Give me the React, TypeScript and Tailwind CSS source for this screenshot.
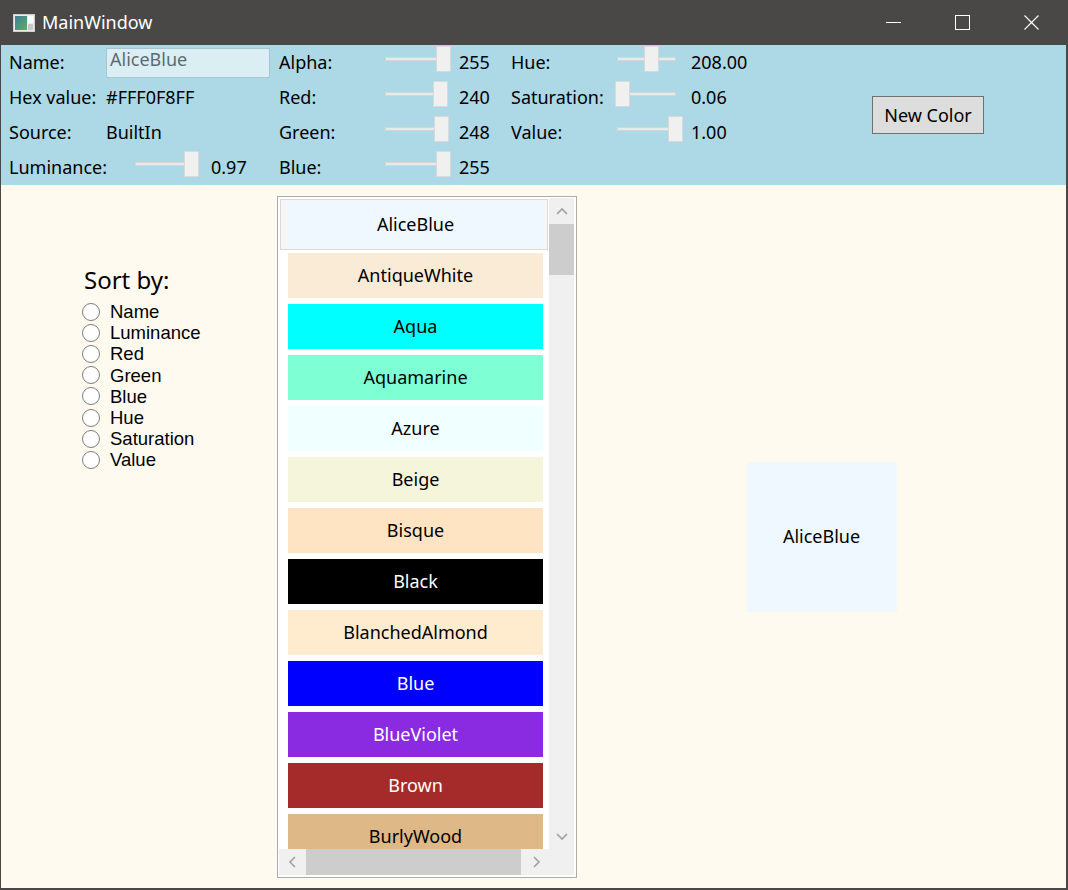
import React from 'react';

type Swatch = { name: string; hex: string; dark?: boolean };

const swatches: Swatch[] = [
  { name: 'AliceBlue', hex: '#F0F8FF' },
  { name: 'AntiqueWhite', hex: '#FAEBD7' },
  { name: 'Aqua', hex: '#00FFFF' },
  { name: 'Aquamarine', hex: '#7FFFD4' },
  { name: 'Azure', hex: '#F0FFFF' },
  { name: 'Beige', hex: '#F5F5DC' },
  { name: 'Bisque', hex: '#FFE4C4' },
  { name: 'Black', hex: '#000000', dark: true },
  { name: 'BlanchedAlmond', hex: '#FFEBCD' },
  { name: 'Blue', hex: '#0000FF', dark: true },
  { name: 'BlueViolet', hex: '#8A2BE2', dark: true },
  { name: 'Brown', hex: '#A52A2A', dark: true },
  { name: 'BurlyWood', hex: '#DEB887' },
];

const sortOptions = ['Name', 'Luminance', 'Red', 'Green', 'Blue', 'Hue', 'Saturation', 'Value'];

function Slider({ frac }: { frac: number }) {
  return (
    <div className="relative w-[71px] h-[26px] shrink-0 self-start mt-px">
      <div className="absolute left-[5px] right-[7px] top-[11px] h-[4px] bg-[#e7eaea] border border-[#d6d6d6]" />
      <div
        className="absolute top-0 w-[15px] h-[26px] bg-[#f0f0f0] border border-[#d9d9d9]"
        style={{ left: Math.round(frac * 56) }}
      />
    </div>
  );
}

function SliderRow({ label, frac, value }: { label: string; frac: number; value: string }) {
  return (
    <div className="flex items-center h-[35px]">
      <span className="w-[101px] shrink-0">{label}</span>
      <Slider frac={frac} />
      <span className="ml-[8px]">{value}</span>
    </div>
  );
}

function Chevron({ dir }: { dir: 'up' | 'down' | 'left' | 'right' }) {
  const d = {
    up: 'M1 7 L6 2 L11 7',
    down: 'M1 2 L6 7 L11 2',
    left: 'M7 1 L2 6 L7 11',
    right: 'M2 1 L7 6 L2 11',
  }[dir];
  const vertical = dir === 'up' || dir === 'down';
  return (
    <svg width={vertical ? 12 : 9} height={vertical ? 9 : 12} viewBox={vertical ? '0 0 12 9' : '0 0 9 12'}>
      <path d={d} fill="none" stroke="#a0a0a0" strokeWidth="1.6" />
    </svg>
  );
}

function TitleBar() {
  return (
    <div className="flex items-center h-[45px] shrink-0 text-white">
      <svg width="22" height="18" viewBox="0 0 22 18" className="ml-[12px]">
        <defs>
          <linearGradient id="ic" x1="0" y1="0" x2="1" y2="1">
            <stop offset="0" stopColor="#3b7fa3" />
            <stop offset="1" stopColor="#5fae5a" />
          </linearGradient>
        </defs>
        <rect x="0.5" y="0.5" width="21" height="17" fill="#ececec" stroke="#cfcfcf" />
        <rect x="2" y="2" width="12" height="14" fill="url(#ic)" />
        <rect x="15" y="2" width="5" height="7" fill="#ffffff" />
        <rect x="15" y="10" width="5" height="6" fill="#c9c9c9" />
      </svg>
      <span className="ml-[7px] text-[18px]">MainWindow</span>
      <div className="ml-auto flex h-full">
        <div className="w-[69px] flex items-center justify-center">
          <div className="w-[15px] h-px bg-white" />
        </div>
        <div className="w-[69px] flex items-center justify-center">
          <div className="w-[15px] h-[15px] border border-white" />
        </div>
        <div className="w-[69px] flex items-center justify-center">
          <svg width="15" height="15" viewBox="0 0 15 15">
            <path d="M0.5 0.5 L14.5 14.5 M14.5 0.5 L0.5 14.5" stroke="#fff" strokeWidth="1.1" />
          </svg>
        </div>
      </div>
    </div>
  );
}

function InfoPanel() {
  return (
    <div className="flex h-[140px] shrink-0 bg-[#add8e6] text-black">
      <div className="w-[278px] shrink-0 pl-[8px] flex flex-col">
        <div className="flex items-center h-[35px]">
          <span className="w-[97px] shrink-0">Name:</span>
          <div className="w-[164px] h-[30px] border border-[#a4c6d1] bg-[#dbeef4] pl-[3px] leading-[20px] text-[#5c6c73]">
            AliceBlue
          </div>
        </div>
        <div className="flex items-center h-[35px]">
          <span className="w-[97px] shrink-0">Hex value:</span>
          <span>#FFF0F8FF</span>
        </div>
        <div className="flex items-center h-[35px]">
          <span className="w-[97px] shrink-0">Source:</span>
          <span>BuiltIn</span>
        </div>
        <div className="flex items-center h-[35px]">
          <span className="w-[121px] shrink-0">Luminance:</span>
          <Slider frac={0.97} />
          <span className="ml-[10px]">0.97</span>
        </div>
      </div>
      <div className="w-[232px] shrink-0 flex flex-col">
        <SliderRow label="Alpha:" frac={1} value="255" />
        <SliderRow label="Red:" frac={240 / 255} value="240" />
        <SliderRow label="Green:" frac={248 / 255} value="248" />
        <SliderRow label="Blue:" frac={1} value="255" />
      </div>
      <div className="w-[361px] shrink-0 flex flex-col">
        <SliderRow label="Hue:" frac={208 / 360} value="208.00" />
        <SliderRow label="Saturation:" frac={0.06} value="0.06" />
        <SliderRow label="Value:" frac={1} value="1.00" />
      </div>
      <div className="flex items-center">
        <button className="w-[112px] h-[38px] bg-[#dddddd] border border-[#707070] text-[18px] text-black">
          New Color
        </button>
      </div>
    </div>
  );
}

function SortBy() {
  return (
    <div className="w-[276px] shrink-0 pl-[81px] pt-[80px]">
      <div className="ml-[2px] text-[24px] leading-[29px]">Sort by:</div>
      <div className="mt-[7px] flex flex-col">
        {sortOptions.map((o) => (
          <div key={o} className="flex items-center h-[21.2px]">
            <div className="w-[18px] h-[18px] rounded-full border border-[#7d7d7d] bg-white shrink-0" />
            <span className="ml-[10px] leading-[21.2px] text-[18.5px] font-['Liberation_Sans',sans-serif]">{o}</span>
          </div>
        ))}
      </div>
    </div>
  );
}

function ColorList() {
  return (
    <div className="mt-[11px] h-[682px] w-[300px] shrink-0 border border-[#acacac] bg-white p-px pr-[2px] flex flex-col">
      <div className="flex flex-1 min-h-0">
        <div className="flex-1 overflow-hidden pt-px pl-px">
          {swatches.map((s, i) => (
            <div
              key={s.name}
              className={
                i === 0
                  ? 'w-[268px] h-[51px] border border-[#dadada] bg-[#f6f6f6] pl-[7px] py-[2px]'
                  : 'w-[268px] h-[51px] border border-transparent pl-[7px] py-[2px]'
              }
            >
              <div
                className={
                  s.dark
                    ? 'w-[255px] h-[45px] flex items-center justify-center text-white'
                    : 'w-[255px] h-[45px] flex items-center justify-center text-black'
                }
                style={{ backgroundColor: s.hex }}
              >
                {s.name}
              </div>
            </div>
          ))}
        </div>
        <div className="w-[25px] flex flex-col bg-[#f0f0f0]">
          <div className="h-[26px] flex items-center justify-center">
            <Chevron dir="up" />
          </div>
          <div className="h-[51px] bg-[#cdcdcd]" />
          <div className="flex-1" />
          <div className="h-[26px] flex items-center justify-center">
            <Chevron dir="down" />
          </div>
        </div>
      </div>
      <div className="flex h-[26px] shrink-0 mb-px">
        <div className="flex-1 flex bg-[#f0f0f0]">
          <div className="w-[26px] flex items-center justify-center">
            <Chevron dir="left" />
          </div>
          <div className="ml-px w-[215px] bg-[#cdcdcd]" />
          <div className="flex-1" />
          <div className="w-[26px] flex items-center justify-center">
            <Chevron dir="right" />
          </div>
        </div>
        <div className="w-[25px] bg-[#f0f0f0]" />
      </div>
    </div>
  );
}

export default function App() {
  return (
    <div className="w-[1068px] h-[890px] bg-[#4a4846] pl-px pr-[2px] pb-[2px] flex flex-col font-['Noto_Sans',sans-serif] text-[18px]">
      <TitleBar />
      <InfoPanel />
      <div className="flex flex-1 min-h-0 bg-[#fffaf0] text-black">
        <SortBy />
        <ColorList />
        <div className="flex-1 flex items-center justify-center">
          <div className="w-[150px] h-[150px] bg-[#f0f8ff] flex items-center justify-center">AliceBlue</div>
        </div>
      </div>
    </div>
  );
}
